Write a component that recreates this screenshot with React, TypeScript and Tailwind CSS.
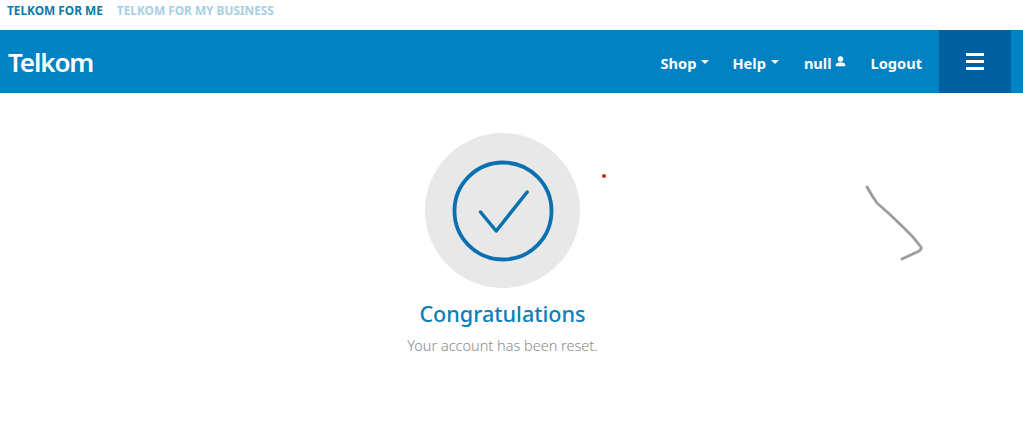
const font = "font-['Noto_Sans','Liberation_Sans',sans-serif]";

function Caret() {
  return <span className="ml-[5px] mb-[4px] inline-block border-x-[4px] border-t-[4px] border-x-transparent border-t-white" />;
}

export default function App() {
  return (
    <div className={`relative h-[427px] w-[1023px] overflow-hidden bg-white ${font}`}>
      <div className="flex h-[30px] items-center gap-[14px] pl-[7px] pb-[10px] pt-[1px] text-[11.85px] font-bold leading-none">
        <span className="text-[#0a7aa8]">TELKOM FOR ME</span>
        <span className="text-[#a6cfe3]">TELKOM FOR MY BUSINESS</span>
      </div>
      <header className="flex h-[63px] items-center justify-between bg-[#0281c3] pl-[8px] pr-[12px] text-white">
        <span className="text-[26px] font-semibold leading-none tracking-[-1.1px]">Telkom</span>
        <nav className="flex h-full items-center pt-[5px] text-[14.6px] font-bold">
          <span className="flex items-center">Shop<Caret /></span>
          <span className="ml-[23px] flex items-center">Help<Caret /></span>
          <span className="ml-[25px] flex items-center">null
            <svg viewBox="0 0 16 16" className="ml-[3px] mb-[4px] h-[11px] w-[11px]" fill="white">
              <circle cx="8" cy="4.500" r="4" />
              <path d="M1 15v-2c0-2.500 3-4 7-4s7 1.500 7 4v2z" />
            </svg>
          </span>
          <span className="ml-[25px]">Logout</span>
          <button className="ml-[17px] -mt-[5px] flex h-[63px] w-[72px] flex-col items-center justify-center gap-[4px] bg-[#005f9e]">
            <span className="h-[3px] w-[18px] bg-white" />
            <span className="h-[3px] w-[18px] bg-white" />
            <span className="h-[3px] w-[18px] bg-white" />
          </button>
        </nav>
      </header>
      <main className="flex flex-col items-center pt-[40px] pr-[18px]">
        <div className="flex h-[155px] w-[155px] items-center justify-center rounded-full bg-[#e8e8e9]">
          <svg viewBox="0 0 102 102" className="h-[102px] w-[102px]" fill="none" stroke="#0a70b0" strokeLinecap="round" strokeLinejoin="round">
            <circle cx="51" cy="51" r="48.500" strokeWidth="3.800" />
            <path d="M28.500 52 L44.200 71 L75.200 32" strokeWidth="3.500" />
          </svg>
        </div>
        <h1 className="mt-[11px] text-[21.6px] font-medium leading-[30px] text-[#0a80ba]">Congratulations</h1>
        <p className="mt-[6px] text-[14.5px] font-light leading-[20px] text-[#8a8a8a]">Your account has been reset.</p>
      </main>
      <span className="absolute left-[602px] top-[174px] h-[4px] w-[4px] rounded-full bg-[#c8281e]" />
      <svg className="absolute left-[860px] top-[180px] h-[85px] w-[70px]" viewBox="860 180 70 85" fill="none" stroke="#9c9c9e" strokeWidth="2.800" strokeLinecap="round" strokeLinejoin="round">
        <path d="M867 187 Q872 196 877 203 Q890 214 903 227 Q913 236 921 247 Q922 250 917 252 L902 259" />
      </svg>
    </div>
  );
}
